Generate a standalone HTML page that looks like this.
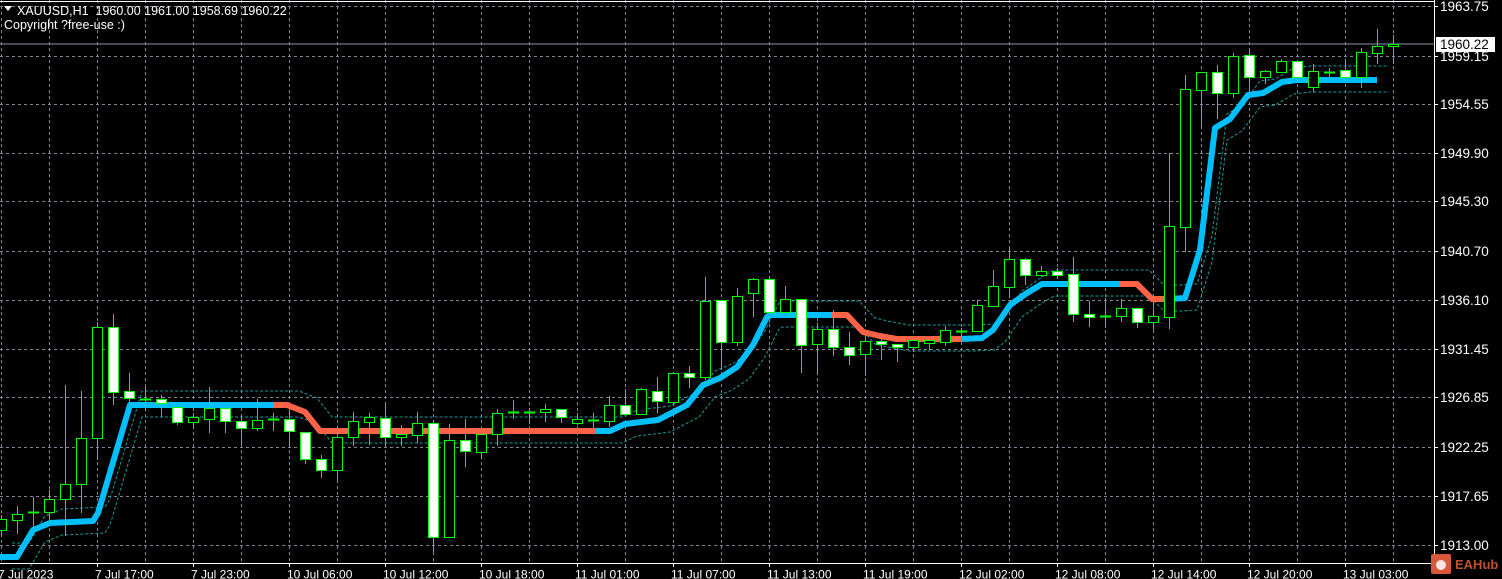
<!DOCTYPE html>
<html><head><meta charset="utf-8">
<style>
html,body{margin:0;padding:0;background:#000;width:1502px;height:579px;overflow:hidden}
svg{display:block}
text{font-family:"Liberation Sans","DejaVu Sans",sans-serif;font-size:12px;fill:#fff;white-space:pre}
.p{font-size:13.5px}
</style></head><body>
<svg id="s" width="1502" height="579" xmlns="http://www.w3.org/2000/svg">
<rect width="1502" height="579" fill="#000"/>
<g id="grid"></g>
<g id="env"></g>
<line x1="0" y1="44" x2="1434" y2="44" stroke="#8a96a3" stroke-width="1"/>
<g id="ind"></g>
<g id="cd"></g>
<line x1="0" y1="1.5" x2="1434" y2="1.5" stroke="#fff"/>
<line x1="1434.5" y1="0" x2="1434.5" y2="564" stroke="#fff"/>
<line x1="0" y1="563.5" x2="1435" y2="563.5" stroke="#fff"/>
<g id="ticks"></g>
<path d="M4 6 L12 6 L8 11 Z" fill="#fff"/>
<text x="17" y="15" style="font-size:12.5px">XAUUSD,H1&#160;&#160;1960.00 1961.00 1958.69 1960.22</text>
<text x="4" y="29" style="font-size:12.5px">Copyright ?free-use :)</text>
<g>
<text class="p" x="1440" y="11">1963.75</text>
<rect x="1436" y="37" width="59" height="15" fill="#fff"/>
<text class="p" x="1440" y="49" style="fill:#000">1960.22</text>
<text class="p" x="1440" y="61">1959.15</text>
<text class="p" x="1440" y="109">1954.55</text>
<text class="p" x="1440" y="158">1949.90</text>
<text class="p" x="1440" y="206">1945.30</text>
<text class="p" x="1440" y="256">1940.70</text>
<text class="p" x="1440" y="305">1936.10</text>
<text class="p" x="1440" y="354">1931.45</text>
<text class="p" x="1440" y="402">1926.85</text>
<text class="p" x="1440" y="452">1922.25</text>
<text class="p" x="1440" y="501">1917.65</text>
<text class="p" x="1440" y="550">1913.00</text>
</g>
<g>
<text x="-2" y="578.5">7 Jul 2023</text>
<text x="95" y="578.5">7 Jul 17:00</text>
<text x="191" y="578.5">7 Jul 23:00</text>
<text x="287" y="578.5">10 Jul 06:00</text>
<text x="383" y="578.5">10 Jul 12:00</text>
<text x="479" y="578.5">10 Jul 18:00</text>
<text x="575" y="578.5">11 Jul 01:00</text>
<text x="671" y="578.5">11 Jul 07:00</text>
<text x="767" y="578.5">11 Jul 13:00</text>
<text x="863" y="578.5">11 Jul 19:00</text>
<text x="959" y="578.5">12 Jul 02:00</text>
<text x="1055" y="578.5">12 Jul 08:00</text>
<text x="1151" y="578.5">12 Jul 14:00</text>
<text x="1247" y="578.5">12 Jul 20:00</text>
<text x="1343" y="578.5">13 Jul 03:00</text>
</g>
<rect x="1431" y="554" width="20" height="20" rx="2" fill="#d9573a"/>
<circle cx="1441" cy="565" r="5" fill="#fff" opacity="0.85"/>
<text x="1455" y="569" style="fill:#c0502f;font-weight:bold;font-size:13px">EAHub</text>
</svg>
<script>
var NS="http://www.w3.org/2000/svg";
function el(p,t,a){var e=document.createElementNS(NS,t);for(var k in a)e.setAttribute(k,a[k]);document.getElementById(p).appendChild(e);return e;}
var hy=[6,56,104,153,201,251,300,349,397,447,496,545];
hy.forEach(function(y){el("grid","line",{x1:0,y1:y+.5,x2:1434,y2:y+.5,stroke:"#7d8894","stroke-dasharray":"3,3"});
el("ticks","line",{x1:1434,y1:y+.5,x2:1438,y2:y+.5,stroke:"#fff"});});
for(var x=1;x<1434;x+=48){el("grid","line",{x1:x+.5,y1:0,x2:x+.5,y2:563,stroke:"#7d8894","stroke-dasharray":"3,3"});}
for(var x=97;x<1434;x+=96){el("ticks","line",{x1:x+.5,y1:563,x2:x+.5,y2:567,stroke:"#fff"});}
var C=[[1,519,530,515,535,"h"],[17,514,520,506,533,"h"],[33,512,512,497,527,"c"],[49,499,512,490,520,"h"],[65,484,499,385,535,"h"],[81,438,484,391,512,"h"],[97,327,438,322,459,"h"],[113,327,392,314,404,"w"],[129,391,398,373,403,"w"],[145,399,399,386,410,"c"],[161,399,403,395,416,"w"],[177,407,422,407,424,"w"],[193,417,422,413,428,"h"],[209,408,419,387,432,"h"],[225,408,421,408,432,"w"],[241,421,428,415,443,"w"],[257,420,428,399,430,"h"],[273,419,419,413,430,"c"],[289,419,431,410,446,"w"],[305,432,459,432,463,"w"],[321,459,470,455,477,"w"],[337,437,470,426,480,"h"],[353,421,437,412,445,"h"],[369,417,422,413,444,"h"],[385,418,437,405,444,"w"],[401,434,437,425,445,"h"],[417,423,435,412,442,"h"],[433,423,537,420,551,"w"],[449,440,537,424,537,"h"],[465,440,451,419,466,"w"],[481,434,452,434,458,"h"],[497,413,434,409,445,"h"],[513,412,412,400,418,"c"],[529,412,412,408,423,"c"],[545,409,412,404,421,"h"],[561,409,417,409,422,"w"],[577,419,423,413,424,"h"],[593,420,420,413,427,"c"],[609,405,421,396,426,"h"],[625,405,414,389,414,"w"],[641,389,414,388,414,"h"],[657,391,401,377,412,"w"],[673,373,402,372,405,"h"],[689,373,377,366,387,"w"],[705,301,377,277,379,"h"],[721,300,342,300,369,"w"],[737,296,342,288,345,"h"],[753,279,293,278,316,"h"],[769,279,312,276,312,"w"],[785,299,312,286,312,"h"],[801,299,345,299,372,"w"],[817,329,344,323,374,"h"],[833,329,347,310,355,"w"],[849,347,355,332,364,"w"],[865,341,354,335,375,"h"],[881,341,344,338,359,"w"],[897,344,347,344,361,"w"],[913,340,347,340,351,"h"],[929,340,343,337,349,"h"],[945,330,342,326,345,"h"],[961,331,331,328,336,"c"],[977,305,331,300,331,"h"],[993,286,306,270,306,"h"],[1009,259,287,249,297,"h"],[1025,259,275,258,284,"w"],[1041,271,275,266,276,"h"],[1057,271,275,268,278,"w"],[1073,274,314,257,321,"w"],[1089,314,317,301,326,"w"],[1105,316,316,298,327,"c"],[1121,308,316,299,321,"h"],[1137,308,322,308,327,"w"],[1153,316,322,301,329,"h"],[1169,226,317,153,328,"h"],[1185,89,227,75,251,"h"],[1201,72,90,72,127,"h"],[1217,72,93,65,118,"w"],[1233,56,93,53,97,"h"],[1249,55,77,50,93,"w"],[1265,71,77,70,83,"h"],[1281,61,72,59,72,"h"],[1297,61,77,61,77,"w"],[1313,71,87,64,91,"h"],[1329,72,72,68,76,"c"],[1345,70,77,59,77,"w"],[1361,52,77,48,87,"h"],[1377,46,53,29,63,"h"],[1393,44,46,35,63,"h"]];
C.forEach(function(c){var x=c[0];
el("cd","line",{x1:x+.5,y1:c[3],x2:x+.5,y2:c[4]+1,stroke:"#00ff00","stroke-width":1});
if(c[5]=="c"){el("cd","line",{x1:x-5,y1:c[1]+.5,x2:x+6,y2:c[1]+.5,stroke:"#00ff00","stroke-width":2});}
else{el("cd","rect",{x:x-4.5,y:c[1]+.5,width:10,height:Math.max(c[2]-c[1],2),fill:c[5]=="w"?"#fff":"#000",stroke:"#00ff00","stroke-width":1});}
});
var B="#00bfff",R="#ff6347";
var segs=[
[B,[[0,557],[17,557],[33,530],[50,523],[93,521],[98,513],[130,405],[273,405]]],
[R,[[273,405],[287,405],[305,412],[320,431],[595,431]]],
[B,[[595,431],[610,431],[625,424],[658,420],[687,405],[703,385],[720,378],[737,367],[753,345],[767,317],[770,315],[832,315]]],
[R,[[832,315],[847,315],[863,332],[880,336],[897,339],[962,339]]],
[B,[[962,339],[982,338],[993,330],[1010,305],[1027,293],[1042,284],[1120,284]]],
[R,[[1120,284],[1137,284],[1152,299],[1170,299]]],
[B,[[1170,299],[1185,298],[1200,250],[1215,128],[1230,119],[1248,95],[1263,93],[1282,82],[1297,80],[1377,80]]]];
function pts(a,dx,dy){return a.map(function(p){return (p[0]+dx)+","+(p[1]+dy)}).join(" ");}
var all=[];segs.forEach(function(s){all=all.concat(s[1]);});
el("env","polyline",{points:pts(all,12,-14),fill:"none",stroke:"#1a9a9a","stroke-width":1,"stroke-dasharray":"3,2"});
el("env","polyline",{points:pts(all,12,12),fill:"none",stroke:"#1a9a9a","stroke-width":1,"stroke-dasharray":"3,2"});
segs.forEach(function(s){el("ind","polyline",{points:pts(s[1],0,0),fill:"none",stroke:s[0],"stroke-width":6,"stroke-linejoin":"round","stroke-linecap":"butt"});});
</script>
</body></html>
